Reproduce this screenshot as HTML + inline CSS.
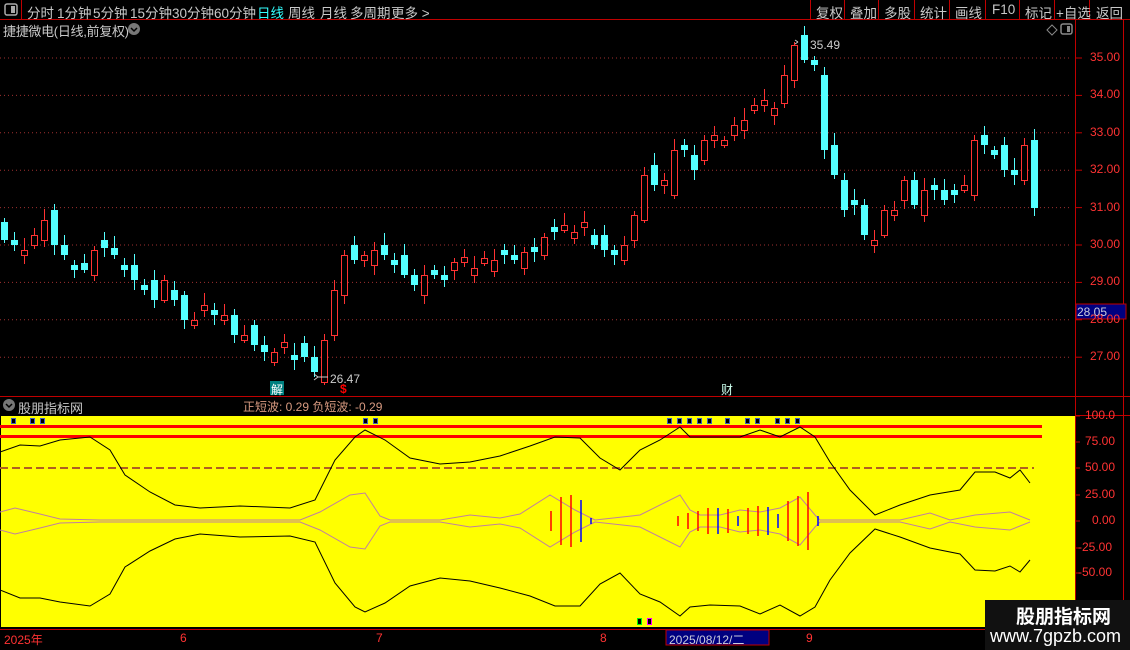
<!DOCTYPE html>
<html><head><meta charset="utf-8">
<style>
*{margin:0;padding:0;box-sizing:border-box}
body{width:1130px;height:650px;background:#000;overflow:hidden;font-family:"Liberation Sans","Noto Sans CJK SC",sans-serif;position:relative}
.t{position:absolute;white-space:nowrap}
.m{position:absolute;top:2px;font-size:13.5px;color:#c8c8c8;white-space:nowrap}
svg{position:absolute;left:0;top:0}
</style></head><body>
<svg id="s" width="1130" height="650" xmlns="http://www.w3.org/2000/svg">
<line x1="0" y1="19.5" x2="1130" y2="19.5" stroke="#c00000"/>
<line x1="21.5" y1="0" x2="21.5" y2="20" stroke="#c00000"/>
<rect x="5" y="4" width="12" height="11" rx="2" fill="none" stroke="#aaa" stroke-width="1.5"/>
<rect x="11" y="6" width="4" height="7" fill="#aaa"/>
<g stroke="#c00000"><line x1="810.5" y1="0" x2="810.5" y2="20"/><line x1="844.5" y1="0" x2="844.5" y2="20"/><line x1="878.5" y1="0" x2="878.5" y2="20"/><line x1="914.5" y1="0" x2="914.5" y2="20"/><line x1="949.5" y1="0" x2="949.5" y2="20"/><line x1="985.5" y1="0" x2="985.5" y2="20"/><line x1="1019.5" y1="0" x2="1019.5" y2="20"/><line x1="1054.5" y1="0" x2="1054.5" y2="20"/><line x1="1089.5" y1="0" x2="1089.5" y2="20"/></g>
<line x1="1075.5" y1="20" x2="1075.5" y2="650" stroke="#c00000"/>
<line x1="1123.5" y1="20" x2="1123.5" y2="650" stroke="#c00000"/>
<line x1="0" y1="396.5" x2="1130" y2="396.5" stroke="#c00000"/>
<line x1="0" y1="629.5" x2="1130" y2="629.5" stroke="#c00000"/>
<line x1="1075" y1="415.5" x2="1130" y2="415.5" stroke="#c00000"/>
<rect x="1" y="416" width="1074" height="211" fill="#ffff00"/>
<g id="g"></g>
<path d="M1047 30 l5 -5 l5 5 l-5 5z" fill="none" stroke="#888"/>
<rect x="1061" y="24" width="11" height="10" rx="2" fill="none" stroke="#888" stroke-width="1.5"/><rect x="1067" y="26" width="3" height="6" fill="#888"/>
<circle cx="9" cy="405" r="6" fill="#777"/>
<path d="M6 404 l3 3 l3 -3" fill="none" stroke="#000" stroke-width="1.5"/>
<circle cx="134" cy="29" r="6" fill="#777"/><path d="M131 28 l3 3 l3 -3" fill="none" stroke="#000" stroke-width="1.5"/>
<rect x="1076" y="304" width="50" height="15" fill="#000080" stroke="#c00000"/>
<rect x="270" y="381" width="14" height="14" fill="#008080"/>
<rect x="666" y="630" width="103" height="15" fill="#000080" stroke="#c00000"/>
<rect x="985" y="600" width="145" height="50" fill="#111"/>
</svg>
<div class="m" style="left:27px">分时</div>
<div class="m" style="left:57px">1分钟</div>
<div class="m" style="left:93px">5分钟</div>
<div class="m" style="left:130px">15分钟</div>
<div class="m" style="left:172px">30分钟</div>
<div class="m" style="left:214px">60分钟</div>
<div class="m" style="left:257px;color:#3ff">日线</div>
<div class="m" style="left:288px">周线</div>
<div class="m" style="left:320px">月线</div>
<div class="m" style="left:350px">多周期</div>
<div class="m" style="left:391px">更多 &gt;</div>
<div class="m" style="left:816px">复权</div>
<div class="m" style="left:850px">叠加</div>
<div class="m" style="left:884px">多股</div>
<div class="m" style="left:920px">统计</div>
<div class="m" style="left:955px">画线</div>
<div class="m" style="left:992px">F10</div>
<div class="m" style="left:1025px">标记</div>
<div class="m" style="left:1056px">+自选</div>
<div class="m" style="left:1096px">返回</div>
<div class="t" style="left:3px;top:21px;font-size:13px;color:#c8c8c8;letter-spacing:-0.3px">捷捷微电(日线,前复权)</div>
<div class="t" style="left:18px;top:398px;font-size:13px;color:#c8c8c8">股朋指标网</div>
<div class="t" style="left:243px;top:398px;font-size:12px;color:#d89a80">正短波: 0.29 负短波: -0.29</div>
<div class="t" style="left:271px;top:381px;font-size:12px;color:#fff">解</div>
<div class="t" style="left:340px;top:382px;font-size:12px;color:#f00;font-weight:bold">$</div>
<div class="t" style="left:721px;top:381px;font-size:12px;color:#cfe">财</div>
<div class="t" style="left:810px;top:38px;font-size:12px;color:#ccc">35.49</div>
<div class="t" style="left:330px;top:372px;font-size:12px;color:#ccc">26.47</div>
<div class="t" style="left:1077px;top:305px;font-size:12px;color:#ccd">28.05</div>
<div class="t" style="left:669px;top:631px;font-size:12px;color:#ccd">2025/08/12/二</div>
<div class="t" style="left:4px;top:631px;font-size:12px;color:#f33">2025年</div>
<div class="t" style="left:180px;top:631px;font-size:12px;color:#f33">6</div>
<div class="t" style="left:376px;top:631px;font-size:12px;color:#f33">7</div>
<div class="t" style="left:600px;top:631px;font-size:12px;color:#f33">8</div>
<div class="t" style="left:806px;top:631px;font-size:12px;color:#f33">9</div>
<div class="t" style="left:1016px;top:602px;font-size:19px;color:#fff;font-weight:bold">股朋指标网</div>
<div class="t" style="left:990px;top:626px;font-size:18px;color:#fff">www.7gpzb.com</div>
<div id="ax"></div>
<script>
(function(){
var NS='http://www.w3.org/2000/svg',g=document.getElementById('g');
function el(tag,a){var e=document.createElementNS(NS,tag);for(var k in a)e.setAttribute(k,a[k]);g.appendChild(e);return e;}
var ax='';
for(var p=27;p<=35;p++){var y=58+(35-p)*37.4;
el('line',{x1:0,y1:y,x2:1070,y2:y,stroke:'#a03030','stroke-dasharray':'1,3'});
el('line',{x1:1075,y1:y,x2:1082,y2:y,stroke:'#c00000'});
ax+='<div class="t" style="left:1090px;top:'+(y-8)+'px;font-size:12px;color:#f33">'+p+'.00</div>';}
var lv=[[100,'100.0',416],[75,'75.00',442],[50,'50.00',468],[25,'25.00',495],[0,'0.00',521],[-25,'-25.00',548],[-50,'-50.00',573]];
lv.forEach(function(l){el('line',{x1:1075,y1:l[2],x2:1080,y2:l[2],stroke:'#c00000'});
ax+='<div class="t" style="left:'+(1120-l[1].length*7)+'px;top:'+(l[2]-8)+'px;font-size:12px;color:#f33">'+l[1]+'</div>';});
document.getElementById('ax').innerHTML=ax;
var c=[240,245,250,235,220,245,255,268,270,250,248,255,270,280,290,300,280,300,320,320,310,310,320,335,335,345,352,352,350,353,357,372,340,290,255,260,255,250,255,265,275,285,275,270,280,262,265,268,266,260,255,258,252,250,237,230,228,232,230,245,250,250,245,215,175,185,185,150,150,170,140,135,140,125,120,105,105,108,75,45,60,65,150,175,210,205,235,240,210,210,180,205,190,185,200,190,185,140,145,155,170,170,145,208];
for(var i=0;i<c.length;i++){var x=4+i*10,o=(i?c[i-1]:232)+((i*7)%5-2)*5,cl=c[i];
if(Math.abs(o-cl)<4)cl=o+(i%2?5:-5);
var tp=Math.min(o,cl),bt=Math.max(o,cl),rise=cl<o;
var hi=tp-4-(i*13)%9,lo=bt+3+(i*11)%8;
if(i==79)hi=42;if(i==31)lo=377;
var col=rise?'#ff3232':'#54ffff';
el('line',{x1:x+.5,y1:hi,x2:x+.5,y2:lo,stroke:col});
if(rise)el('rect',{x:x-2.5,y:tp+.5,width:6,height:bt-tp,fill:'#000',stroke:col});
else el('rect',{x:x-3,y:tp,width:7,height:bt-tp,fill:col});}
el('path',{d:'M318 377 l-4 -3 m4 3 l-4 3 m4 -3 h10',stroke:'#ccc',fill:'none'});
el('path',{d:'M798 42 l-3 -2 m3 2 l-3 2',stroke:'#ccc',fill:'none'});
el('rect',{x:0,y:425,width:1042,height:3,fill:'#f00'});el('rect',{x:0,y:435,width:1042,height:3,fill:'#f00'});
el('line',{x1:0,y1:468,x2:1034,y2:468,stroke:'#b06020','stroke-width':2,'stroke-dasharray':'8,4'});
var U=[[0,452],[20,445],[40,446],[60,440],[90,437],[110,450],[125,475],[150,492],[175,505],[200,508],[240,506],[290,508],[315,500],[335,460],[355,437],[365,430],[385,440],[410,458],[440,464],[470,462],[500,456],[530,446],[555,437],[580,438],[600,458],[620,470],[640,450],[660,440],[680,427],[690,437],[710,437],[740,437],[760,430],[780,437],[800,427],[815,437],[830,462],[850,490],[875,515],[900,505],[930,495],[960,490],[975,472],[995,472],[1010,478],[1020,470],[1030,483]];
var a='',b='';U.forEach(function(p,k){a+=(k?'L':'M')+p[0]+' '+p[1];b+=(k?'L':'M')+p[0]+' '+(1042-p[1]+(k%3));});
el('path',{d:a,fill:'none',stroke:'#000'});el('path',{d:b,fill:'none',stroke:'#000'});
var env=[[0,512],[15,508],[40,514],[60,519],[100,520],[150,520],[300,520],[320,512],[350,495],[365,493],[380,516],[390,520],[440,520],[470,515],[500,518],[520,514],[550,495],[575,510],[595,520],[640,515],[680,495],[690,510],[700,515],[720,515],[740,510],[760,512],[780,508],[800,497],[815,515],[820,520],[900,520],[930,513],[950,520],[975,515],[1010,512],[1030,520]];
var e1='',e2='';env.forEach(function(p,k){e1+=(k?'L':'M')+p[0]+' '+p[1];e2+=(k?'L':'M')+p[0]+' '+(1042-p[1]);});
el('path',{d:e1,fill:'none',stroke:'#c080a0'});el('path',{d:e2,fill:'none',stroke:'#c080a0'});
var bars=[[551,10,'#f00'],[561,24,'#f00'],[571,26,'#f00'],[581,21,'#00f'],[591,3,'#00f'],[678,5,'#f00'],[688,8,'#f00'],[698,10,'#f00'],[708,13,'#f00'],[718,13,'#00f'],[728,12,'#f00'],[738,5,'#00f'],[748,13,'#f00'],[758,15,'#f00'],[768,14,'#00f'],[778,7,'#00f'],[788,20,'#f00'],[798,25,'#f00'],[808,29,'#f00'],[818,5,'#00f']];
bars.forEach(function(q){el('line',{x1:q[0],y1:521-q[1],x2:q[0],y2:521+q[1],stroke:q[2],'stroke-width':1.5});});
[14,33,43,366,376,670,680,690,700,710,728,748,758,778,788,798].forEach(function(x){el('rect',{x:x-3,y:418,width:5,height:6,fill:'#4060c0'});el('rect',{x:x-2,y:419,width:3,height:4,fill:'#000'});});
el('rect',{x:637,y:618,width:5,height:7,fill:'#0f0'});el('rect',{x:638,y:619,width:3,height:5,fill:'#000'});
el('rect',{x:647,y:618,width:5,height:7,fill:'#f0f'});el('rect',{x:648,y:619,width:3,height:5,fill:'#000'});
})();
</script>
</body></html>
